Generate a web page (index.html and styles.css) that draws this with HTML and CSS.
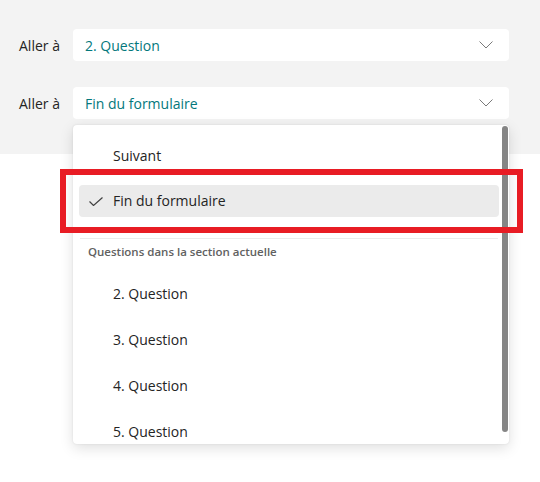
FILE: index.html
```html
<!DOCTYPE html>
<html lang="fr">
<head>
    <meta charset="UTF-8">
    <meta name="viewport" content="width=device-width, initial-scale=1.0">
    <title>Aller à</title>
    <link rel="stylesheet" href="styles.css">
</head>
<body>
    <div class="panel">
        <div class="row">
            <span class="label">Aller à</span>
            <div class="select">
                <span>2. Question</span>
                <svg class="chevron" width="14" height="8" viewBox="0 0 14 8"><polyline points="0.5,0.5 7,7 13.5,0.5" /></svg>
            </div>
        </div>
        <div class="row">
            <span class="label">Aller à</span>
            <div class="select">
                <span>Fin du formulaire</span>
                <svg class="chevron" width="14" height="8" viewBox="0 0 14 8"><polyline points="0.5,0.5 7,7 13.5,0.5" /></svg>
            </div>
        </div>
    </div>

    <!-- liste ouverte du second menu -->
    <div class="dropdown">
        <div class="item"><div class="opt">Suivant</div></div>
        <div class="item">
            <div class="opt selected">
                <svg class="check" width="14" height="9" viewBox="0 0 14 9"><polyline points="0.5,4.5 4.5,8.5 13.5,0.5" /></svg>
                Fin du formulaire
            </div>
        </div>
        <div class="divider"></div>
        <div class="group-title">Questions dans la section actuelle</div>
        <div class="item q"><div class="opt">2. Question</div></div>
        <div class="item q"><div class="opt">3. Question</div></div>
        <div class="item q"><div class="opt">4. Question</div></div>
        <div class="item q"><div class="opt">5. Question</div></div>
        <div class="scrollbar"></div>
    </div>

    <div class="highlight"></div>
</body>
</html>
```

FILE: styles.css
```css
body {
    font-family: "Open Sans", "Noto Sans", sans-serif;
    font-size: 14px;
    color: #242424;
    margin: 0;
    background-color: white;
}

.panel {
    background-color: #f3f3f3;
    padding: 29px 31px 35px 19px;
    display: flex;
    flex-direction: column;
    gap: 26px;
}

.row {
    display: flex;
    align-items: center;
}

.label {
    width: 54px;
    flex-shrink: 0;
}

.select {
    flex: 1;
    height: 32px;
    background-color: white;
    border-radius: 4px;
    padding: 0 16px 0 12px;
    display: flex;
    align-items: center;
    justify-content: space-between;
    color: #03787c;
}

.chevron polyline {
    fill: none;
    stroke: #7a7a7a;
    stroke-width: 1;
}

.dropdown {
    position: absolute;
    left: 73px;
    top: 125px;
    width: 436px;
    height: 319px;
    box-sizing: border-box;
    padding: 8px 10px 0 6px;
    background-color: white;
    border-radius: 4px;
    box-shadow: 0 4px 14px rgba(0, 0, 0, 0.13), 0 0 2px rgba(0, 0, 0, 0.1);
    overflow: hidden;
}

.item {
    height: 45px;
    display: flex;
    align-items: center;
}

.item.q {
    height: 46px;
}

.opt {
    position: relative;
    flex: 1;
    height: 32px;
    border-radius: 4px;
    padding-left: 34px;
    display: flex;
    align-items: center;
}

.opt.selected {
    background-color: #ebebeb;
}

.check {
    position: absolute;
    left: 10px;
    top: 12px;
}

.check polyline {
    fill: none;
    stroke: #424242;
    stroke-width: 1.2;
}

.divider {
    margin: 15px 1px 0;
    border-top: 1px solid #ebebeb;
}

.group-title {
    margin: 5px 0 10px 9px;
    line-height: 16px;
    font-size: 11.5px;
    font-weight: 600;
    color: #616161;
}

.scrollbar {
    position: absolute;
    left: 429px;
    top: 1px;
    width: 6px;
    height: 306px;
    border-radius: 3px;
    background-color: #858585;
}

.highlight {
    position: absolute;
    left: 60px;
    top: 169px;
    width: 463px;
    height: 64px;
    box-sizing: border-box;
    border: 6px solid #e81c24;
}
```
